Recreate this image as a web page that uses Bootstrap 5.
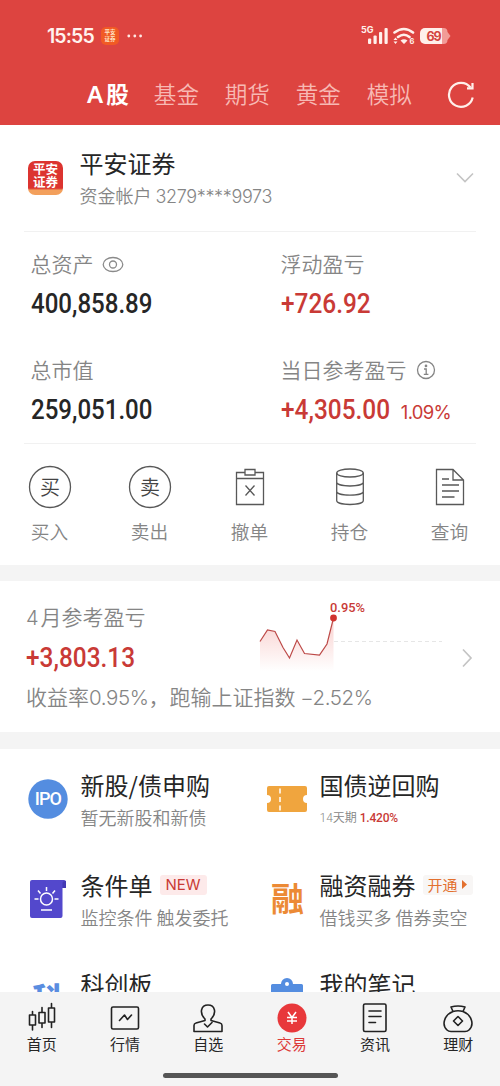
<!DOCTYPE html>
<html lang="zh-CN">
<head>
<meta charset="utf-8">
<meta name="viewport" content="width=device-width, initial-scale=1">
<title>平安证券</title>
<link href="https://cdn.jsdelivr.net/npm/bootstrap@5.3.0/dist/css/bootstrap.min.css" rel="stylesheet">
<style>
:root{--brand:#dd4440;--up:#c93a36;--muted:#858585;--ink:#262626}
body{font-family:"Noto Sans CJK SC",sans-serif;color:var(--ink);background:#fff;width:500px;height:1086px;overflow:hidden}
svg{display:block;flex:none}
.screen{height:1086px}
.top{background:var(--brand);height:125px;color:#fff}
.status{height:70px;padding:1px 49px 0 47px}
.clock{font:600 19.5px/20px Inter,sans-serif;letter-spacing:-.9px;width:54px;color:#fff2ee}
.mini{width:18px;height:18px;border-radius:5px;background:#f15a24;font-size:5.5px;line-height:6.5px;font-weight:700;padding-top:2.5px;color:#ffe6c8}
.tabs{height:48px;padding-left:87px;gap:25.8px;font-size:22.6px;line-height:44px;font-weight:350;color:#f7b9b4}
.tabs .on{font-weight:700;color:#fff;width:41px}
.tabs .on i{font:600 24px "Noto Sans",sans-serif;margin-right:3px}
.tabs span{margin-top:-1px}
.tabs svg{margin-left:9px;margin-top:1px}
.logo{width:35px;height:34px;margin-top:13px;border-radius:7px;background:linear-gradient(#dc3430 0 80%,#f3a05c 86%);color:#fff;font-weight:700;font-size:12.5px;line-height:12.5px;padding-top:2px}
.acct{height:106px;padding:23px 26px 0 28px}
.t24{font-size:24px;line-height:30px;font-weight:400;white-space:nowrap}
.t18{font-size:18px;line-height:30px;font-weight:350;color:var(--muted);white-space:nowrap}
.acct .t18{margin-top:2px}
.acctno{font-family:Inter,"Noto Sans CJK SC",sans-serif;font-weight:300;letter-spacing:-.35px}
.rule{height:1px;background:#f1f1f1;margin:0 24px}
.cell{height:106px;padding:14px 0 0 30.5px}
.cell+.cell+.cell{height:105px}
.lab{font-size:21px;line-height:34px;font-weight:350;color:var(--muted);white-space:nowrap}
.lab svg{margin-top:2px}
.num{font:500 27.5px/32px Roboto,sans-serif;transform:scaleX(.875);transform-origin:left;display:inline-block;white-space:nowrap}
.num.up{transform:scaleX(.888)}
.cell .num{margin-top:8px}
.up{color:var(--up)}
.pct{font:400 18.5px/32px Inter,sans-serif;letter-spacing:-.7px;margin-left:-2.5px}
.acts{height:121px;padding-top:21px;margin-left:-.5px}
.act{width:100px}
.act .lab{font-size:18.7px;line-height:30px;margin-top:7px}
.gap-bar{height:16px;background:#f4f4f4}
.month{height:151px;padding:18px 27px 0 26px}
.month .mid{height:47px;padding-top:9px}
.four{font:300 20px Inter,sans-serif;margin-right:2px}
.rate{font-size:21px;line-height:34px;font-weight:350;color:var(--muted);white-space:nowrap;margin-top:-1px}
.rate b{font:300 20.5px Inter,sans-serif;letter-spacing:-.4px}
.spark{left:258px;top:16px}
.tile{height:99.5px;padding-top:21px}
.tile .text{margin-left:12.5px}
.tile .t18{margin-top:2px}
.ico{width:40px;height:40px;margin-top:9px}
.tag{height:20px;border-radius:3px;margin-left:7px}
.tagnew{font:400 15px/20px Inter,sans-serif;padding:0 6px;background:#fdeaea;color:var(--up)}
.tagopen{font-size:15px;line-height:20px;background:#f8f6f5;color:#e3702e;padding:0 5px}
.bond{font:350 12px/20px Roboto,"Noto Sans CJK SC",sans-serif;color:var(--muted);margin-top:8px}
.bond .up{font-weight:500;letter-spacing:-.2px}
.bottom{height:94px;background:#f4f4f4;z-index:2}
.bottom .item{width:83.33px;font-size:15px;line-height:22px}
.home{width:175px;height:5px;border-radius:3px;background:#555;margin-top:18px}
.ln{fill:none;stroke:#585858;stroke-width:1.3}
.nv{fill:none;stroke:#222;stroke-width:1.6;stroke-linejoin:round;stroke-linecap:round}
</style>
</head>
<body>
<div class="screen d-flex flex-column position-relative overflow-hidden">
<header class="top flex-shrink-0">
  <div class="status d-flex align-items-center">
    <span class="clock">15:55</span>
    <span class="mini text-center">平安<br>证券</span>
    <svg class="ms-2" width="16" height="4" fill="#ffe9e4"><circle cx="1.8" cy="2" r="1.4"/><circle cx="7.8" cy="2" r="1.4"/><circle cx="13.6" cy="2" r="1.4"/></svg>
    <svg class="ms-auto" width="92" height="24" viewBox="0 0 92 24" fill="#fff0eb">
      <text x="2" y="8.5" font-family="Inter" font-size="9" font-weight="700">5G</text>
      <rect x="9" y="14.500" width="3.200" height="5.500" rx="1"/><rect x="14.500" y="11.500" width="3.200" height="8.500" rx="1"/><rect x="20" y="8" width="3.200" height="12" rx="1"/><rect x="25.500" y="4" width="3.200" height="16" rx="1"/>
      <g fill="none" stroke="#fff0eb" stroke-width="2.600" stroke-linecap="round"><path d="M35.500 8.500Q45 1.500 54 8.500M39 13Q45 8.500 50.500 13"/></g>
      <path d="M41.500 16.500Q45 14 48.500 16.500L45 20zM34.500 16l2-2.500 2 2.500zM34.500 17.500l2 2.500 2-2.500z"/>
      <text x="50.500" y="20" font-family="Inter" font-size="7.500" font-weight="700">6</text>
      <path d="M83 4h1.500a4 4 0 0 1 4 4l3 4-3 4a4 4 0 0 1-4 4H83z" fill="#f29b97"/>
      <path d="M66 4h17v16H66a5 5 0 0 1-5-5V9a5 5 0 0 1 5-5z"/>
      <text x="67.500" y="16.500" font-family="Inter" font-size="12.500" font-weight="700" fill="#d3443f" textLength="15">69</text>
    </svg>
  </div>
  <nav class="tabs d-flex align-items-center">
    <span class="on text-nowrap"><i>A</i>股</span><span>基金</span><span>期货</span><span>黄金</span><span>模拟</span>
    <svg width="28" height="28" viewBox="0 0 28 28" fill="none" stroke="#fff0eb" stroke-width="2.200"><path d="M25.700 16.500A12 12 0 1 1 23.500 6.500"/><path d="M20 7.300h5.500V2"/></svg>
  </nav>
</header>

<section class="flex-shrink-0">
  <div class="acct d-flex">
    <div class="logo text-center flex-shrink-0">平安<br>证券</div>
    <div style="margin-left:16.500px"><div class="t24">平安证券</div><div class="t18">资金帐户 <span class="acctno">3279****9973</span></div></div>
    <svg class="ms-auto" style="margin-top:24px;margin-right:-1px" width="20" height="12" fill="none" stroke="#c4c4c4" stroke-width="1.600"><path d="M2 1.500l8 8 8-8"/></svg>
  </div>
  <div class="rule"></div>
  <div class="row g-0">
    <div class="col-6 cell"><div class="lab d-flex align-items-center">总资产<svg class="ms-2" width="22" height="18" fill="none" stroke="#8a8a8a" stroke-width="1.300"><ellipse cx="11" cy="9.500" rx="9.800" ry="7"/><circle cx="11" cy="9.500" r="3.500"/></svg></div><span class="num">400,858.89</span></div>
    <div class="col-6 cell"><div class="lab">浮动盈亏</div><span class="num up">+726.92</span></div>
    <div class="col-6 cell"><div class="lab">总市值</div><span class="num">259,051.00</span></div>
    <div class="col-6 cell"><div class="lab d-flex align-items-center">当日参考盈亏<svg style="margin-left:9px" width="20" height="20" fill="none" stroke="#858585" stroke-width="1.300"><circle cx="10" cy="10" r="8.500"/><path d="M8 9h2.200v5M7.800 14.300h4.600"/><circle cx="10" cy="5.900" r=".7" fill="#858585"/></svg></div><span class="num up">+4,305.00</span><span class="up pct">1.09%</span></div>
  </div>
  <div class="rule"></div>
  <div class="acts d-flex">
    <div class="act d-flex flex-column align-items-center"><svg width="44" height="44"><circle class="ln" cx="22" cy="22" r="20.500"/><text x="22" y="29.500" text-anchor="middle" font-size="20" font-weight="350" fill="#444">买</text></svg><span class="lab">买入</span></div>
    <div class="act d-flex flex-column align-items-center"><svg width="44" height="44"><circle class="ln" cx="22" cy="22" r="20.500"/><text x="22" y="29.500" text-anchor="middle" font-size="20" font-weight="350" fill="#444">卖</text></svg><span class="lab">卖出</span></div>
    <div class="act d-flex flex-column align-items-center"><svg width="44" height="44" class="ln"><path d="M17 7.500H8.500v32h27v-32H27M8.500 13.500h27M17 4.500h10v5.500H17zM17.500 20.500l9 10M26.500 20.500l-9 10"/></svg><span class="lab">撤单</span></div>
    <div class="act d-flex flex-column align-items-center"><svg width="44" height="44" class="ln"><ellipse cx="22" cy="8" rx="13.300" ry="4"/><path d="M8.700 8v27.500c0 5.300 26.600 5.300 26.600 0V8M8.700 17c0 5.300 26.600 5.300 26.600 0M8.700 26.200c0 5.300 26.600 5.300 26.600 0"/></svg><span class="lab">持仓</span></div>
    <div class="act d-flex flex-column align-items-center"><svg width="44" height="44" class="ln"><path d="M25 4.500H8.500v35h27V15zV15h10.500M14 14h7M14 20h17M14 26h17M14 32h12.500"/></svg><span class="lab">查询</span></div>
  </div>
</section>
<div class="gap-bar flex-shrink-0"></div>
<section class="month d-flex flex-shrink-0 position-relative">
  <div><div class="lab"><span class="four">4</span>月参考盈亏</div><div class="mid"><span class="num up">+3,803.13</span></div><div class="rate">收益率<b>0.95%</b>，跑输上证指数 <b>−2.52%</b></div></div>
  <svg class="spark position-absolute" width="190" height="76">
    <defs><linearGradient id="fade" x2="0" y2="1"><stop stop-color="#f9d0ce"/><stop offset="1" stop-color="#fff"/></linearGradient></defs>
    <path d="M76 44.500H184" stroke="#e6e6e6" stroke-dasharray="4 3"/>
    <path d="M2 44.500L9.500 33l7.500 1.500 8 16L31.500 61l7.500-18 7.500 13.500 15 1.500 7.500-11L75.500 21V74H2z" fill="url(#fade)"/>
    <path d="M2 44.500L9.500 33l7.500 1.500 8 16L31.500 61l7.500-18 7.500 13.500 15 1.500 7.500-11L75.500 21" fill="none" stroke="#bd4a48" stroke-width="1.200"/>
    <circle cx="75.500" cy="21" r="3.400" fill="#d0332f"/>
    <text x="72" y="15" font-family="Roboto" font-size="13.500" font-weight="500" fill="#c93a36" textLength="35" lengthAdjust="spacingAndGlyphs">0.95%</text>
  </svg>
  <svg class="ms-auto" style="margin-top:49px" width="12" height="20" fill="none" stroke="#c4c4c4" stroke-width="1.700"><path d="M2 1.500l8 8.500-8 8.500"/></svg>
</section>
<div class="gap-bar flex-shrink-0" style="height:17px"></div>
<section class="d-flex">
  <div style="width:239px;padding-left:28px">
    <div class="tile d-flex"><svg class="ico"><circle cx="20" cy="20" r="19.700" fill="#548de0"/><text x="20.300" y="26.300" text-anchor="middle" font-family="Roboto" font-size="18" font-weight="500" fill="#fff" textLength="27">IPO</text></svg><div class="text"><div class="t24">新股/债申购</div><div class="t18">暂无新股和新债</div></div></div>
    <div class="tile d-flex"><svg class="ico"><path d="M4 1h32q2 0 2 2v6h-3.500v28q0 2-2 2H4q-2 0-2-2V3q0-2 2-2z" fill="#5348cc"/><path d="M34.500 9V4q0-2 3.500-2v7z" fill="#4339b4"/><g fill="none" stroke="#fff" stroke-width="1.500"><circle cx="18.500" cy="20" r="6"/><path d="M13 31h11M18.500 8v4M10 11.500l2.500 3M27 11.500l-2.500 3M6.500 20h4M26.500 20h4"/></g></svg><div class="text"><div class="t24 d-flex align-items-center">条件单<span class="tag tagnew">NEW</span></div><div class="t18">监控条件 触发委托</div></div></div>
    <div class="tile d-flex"><svg class="ico"><text x="4" y="31.500" font-size="31" font-weight="900" fill="#5a8de0">科</text></svg><div class="text"><div class="t24">科创板</div></div></div>
  </div>
  <div style="padding-left:28px">
    <div class="tile d-flex"><svg class="ico"><path d="M2 7h36q2 0 2 2v7a3.500 3.500 0 0 0 0 8v7q0 2-2 2H2q-2 0-2-2v-7a3.500 3.500 0 0 0 0-8V9q0-2 2-2z" fill="#f0a53e"/><path d="M13 9.500v22" stroke="#fff" stroke-width="1.500" stroke-dasharray="5 3.500"/></svg><div class="text"><div class="t24">国债逆回购</div><div class="bond">14天期 <span class="up">1.420%</span></div></div></div>
    <div class="tile d-flex"><svg class="ico"><text x="4" y="32" font-size="33" font-weight="700" fill="#ec8a35">融</text></svg><div class="text"><div class="t24 d-flex align-items-center">融资融券<span class="tag tagopen d-flex align-items-center">开通<svg width="6" height="9" class="ms-1"><path d="M0 0l5 4.500L0 9z" fill="#e3702e"/></svg></span></div><div class="t18">借钱买多 借券卖空</div></div></div>
    <div class="tile d-flex"><svg class="ico"><path d="M5.500 6H14a6 6 0 0 1 12 0h8.500q1.500 0 1.500 1.500V39H4V7.500Q4 6 5.500 6z" fill="#548de0"/><circle cx="20" cy="6" r="2" fill="#fff"/></svg><div class="text"><div class="t24">我的笔记</div></div></div>
  </div>
</section>

<nav class="bottom position-absolute bottom-0 start-0 w-100">
  <div class="d-flex" style="padding-top:9px">
    <div class="item d-flex flex-column align-items-center"><svg width="34" height="32" class="nv"><path d="M4.500 14h6v10h-6zM14 11.500h6v10.500h-6zM23.500 7h6v14h-6zM7.500 10.500v3.500M7.500 24v5M17 6.500v5M17 22v4.500M26.500 2.500v4.500M26.500 21v5.500"/></svg>首页</div>
    <div class="item d-flex flex-column align-items-center"><svg width="34" height="32" class="nv"><rect x="3.500" y="6" width="27" height="22" rx="1.500"/><path d="M11.500 19.500l5-5.500 3 4.500 4-4.500"/></svg>行情</div>
    <div class="item d-flex flex-column align-items-center"><svg width="34" height="32" class="nv"><path d="M14 18c-6-6-4-14 3-14s9 8 3 14v1.500l9 2.500q2 .5 2 2.500V30.500H3V24.500q0-2 2-2.500l9-2.500zM13.500 23l3 3 4.500-4.500"/></svg>自选</div>
    <div class="item d-flex flex-column align-items-center" style="color:#dd3a38"><svg width="34" height="32"><circle cx="17" cy="17" r="14.500" fill="#e8383b"/><path d="M13 11l4 5.500 4-5.500M17 16.500V23M12 16.500h10M12 20h10" fill="none" stroke="#fff" stroke-width="1.500"/></svg>交易</div>
    <div class="item d-flex flex-column align-items-center"><svg width="34" height="32" class="nv"><rect x="5.500" y="3" width="22.500" height="27.500" rx="1.500"/><path d="M11 10h12M11 15.500h12M11 21.500h6.500"/></svg>资讯</div>
    <div class="item d-flex flex-column align-items-center"><svg width="34" height="32" class="nv"><path d="M12 10.500C3 14 .5 24 6 29q1.500 1.500 4 1.500h14q2.500 0 4-1.500c5.500-5 3-15-6-18.500q-5-1.500-10 0zL10 6q7-2 14 0l-2 4.500M17 15.500l4.500 4.500-4.500 4.500-4.500-4.500z"/></svg>理财</div>
  </div>
  <div class="home mx-auto"></div>
</nav>
</div>
<script src="https://cdn.jsdelivr.net/npm/bootstrap@5.3.0/dist/js/bootstrap.bundle.min.js"></script>
</body>
</html>
